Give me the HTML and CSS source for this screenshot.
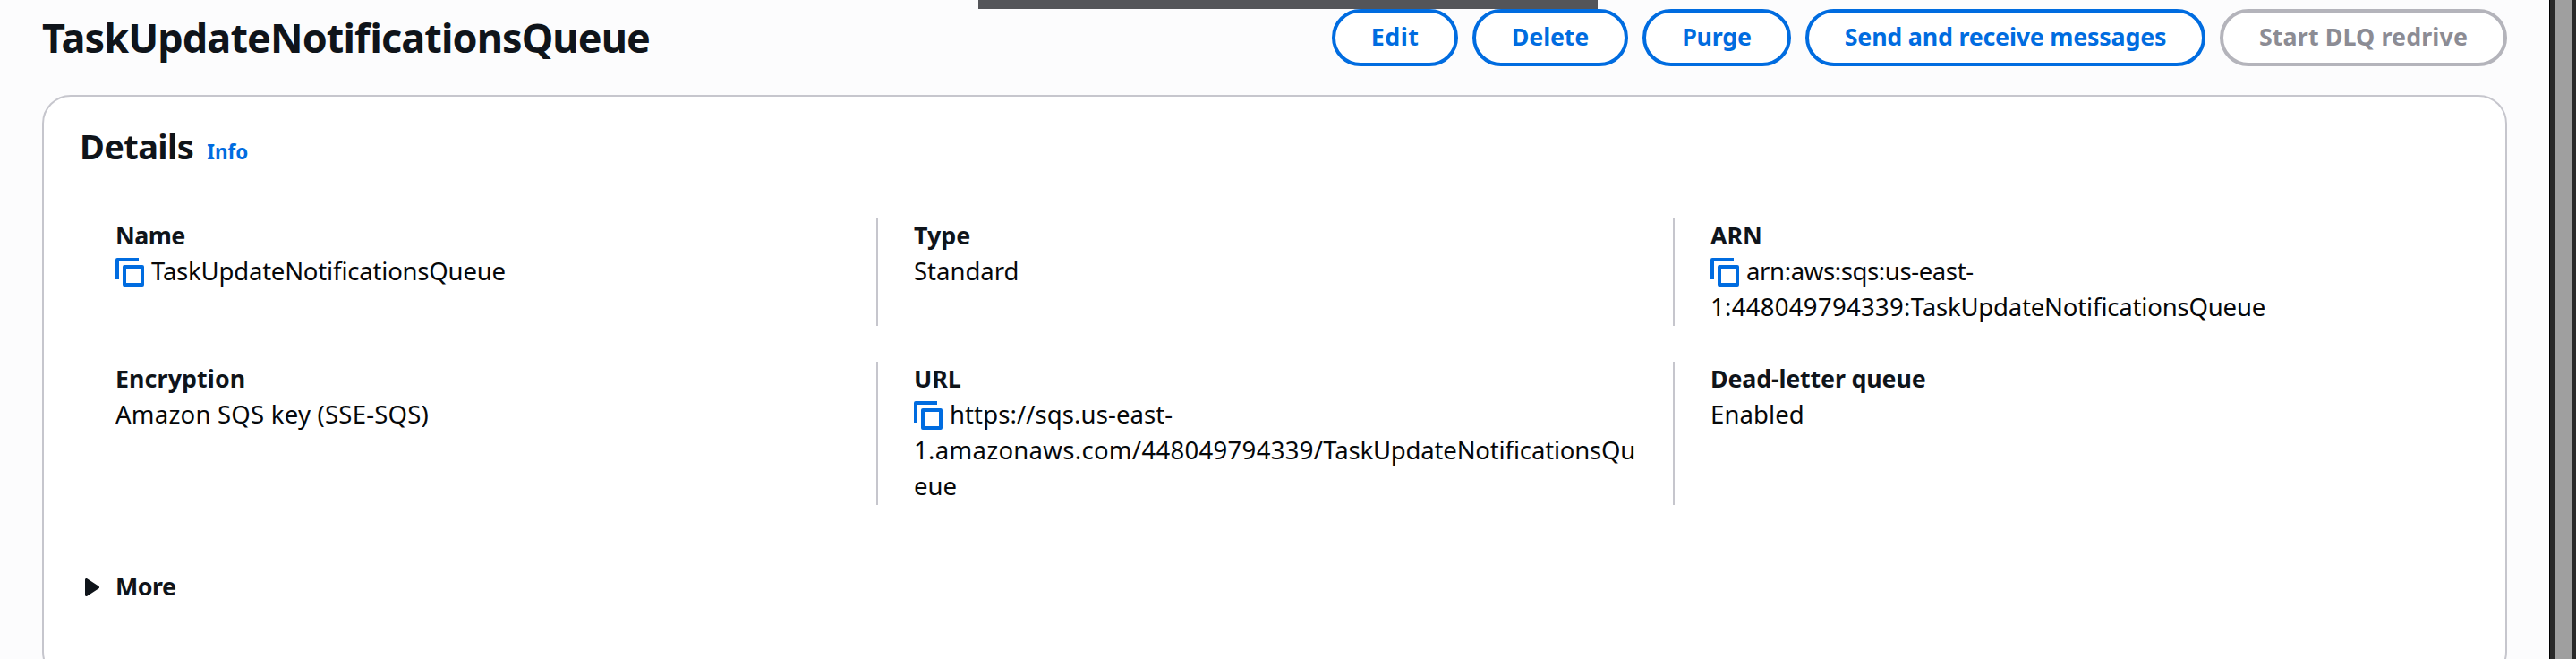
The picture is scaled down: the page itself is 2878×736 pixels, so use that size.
FILE: index.html
```html
<!DOCTYPE html>
<html lang="en">
<head>
<meta charset="utf-8">
<title>TaskUpdateNotificationsQueue</title>
<link rel="stylesheet" href="styles.css">
</head>
<body>
<svg class="defs" width="0" height="0" aria-hidden="true">
  <symbol id="copy" viewBox="0 0 32 32">
    <path d="M2 24V2H26" fill="none" stroke="currentColor" stroke-width="4" stroke-linejoin="round"/>
    <rect x="10" y="10" width="20" height="20" fill="none" stroke="currentColor" stroke-width="4" stroke-linejoin="round"/>
  </symbol>
</svg>
<div class="window">
  <div class="flash"></div>
  <main class="page">
    <header class="header">
      <h1 class="title">TaskUpdateNotificationsQueue</h1>
      <div class="actions">
        <button class="btn btn-edit">Edit</button>
        <button class="btn btn-delete">Delete</button>
        <button class="btn btn-purge">Purge</button>
        <button class="btn btn-send">Send and receive messages</button>
        <button class="btn btn-redrive" disabled>Start DLQ redrive</button>
      </div>
    </header>
    <section class="card">
      <div class="card-head">
        <h2 class="card-title">Details</h2>
        <a class="info">Info</a>
      </div>
      <div class="grid">
        <div class="cell"><div class="field">
          <div class="label l-name">Name</div>
          <div class="line"><svg class="icon"><use href="#copy"/></svg><span class="v-name">TaskUpdateNotificationsQueue</span></div>
        </div></div>
        <div class="cell"><div class="field">
          <div class="label">Type</div>
          <div class="line"><span>Standard</span></div>
        </div></div>
        <div class="cell"><div class="field">
          <div class="label">ARN</div>
          <div class="line"><svg class="icon"><use href="#copy"/></svg><span class="v-arn">arn:aws:sqs:us-east-</span></div>
          <div class="line"><span><span class="v-id">1:448049794339:</span><span class="v-queue">TaskUpdateNotificationsQueue</span></span></div>
        </div></div>
        <div class="cell"><div class="field">
          <div class="label l-enc">Encryption</div>
          <div class="line"><span class="v-enc">Amazon SQS key (SSE-SQS)</span></div>
        </div></div>
        <div class="cell"><div class="field">
          <div class="label">URL</div>
          <div class="line"><svg class="icon"><use href="#copy"/></svg><span class="v-url">https://sqs.us-east-</span></div>
          <div class="line"><span><span class="v-id">1.amazonaws.com/448049794339/</span><span class="v-queue">TaskUpdateNotificationsQu</span></span></div>
          <div class="line"><span>eue</span></div>
        </div></div>
        <div class="cell"><div class="field">
          <div class="label l-dlq">Dead-letter queue</div>
          <div class="line"><span class="v-dlq">Enabled</span></div>
        </div></div>
      </div>
      <div class="more">
        <svg class="caret" viewBox="0 0 16 20"><path d="M1.5 1.5V18.5L14.5 10Z" fill="currentColor" stroke="currentColor" stroke-width="3" stroke-linejoin="round"/></svg>
        <span>More</span>
      </div>
    </section>
  </main>
  <div class="scrollbar"></div>
</div>
</body>
</html>
```
FILE: styles.css
```css
* { box-sizing: border-box; }

body {
  margin: 0;
  background: #fcfcfd;
  color: #0f141a;
  font-family: "Noto Sans", "Open Sans", sans-serif;
  font-size: 27.5px;
  line-height: 40px;
  font-feature-settings: "liga" 1;
  overflow: hidden;
}

.defs { position: absolute; }

.window {
  position: relative;
  display: flex;
  height: 736px;
  overflow: hidden;
}

.flash {
  position: absolute;
  left: 1093px;
  top: 0;
  width: 692px;
  height: 10px;
  background: #545559;
}

.page {
  flex: 1;
  padding: 10px 48px 0 47px;
}

.header {
  display: flex;
  justify-content: space-between;
  height: 96px;
}

.title {
  margin: 2px 0 0;
  font-size: 45px;
  line-height: 60px;
  font-weight: 700;
  letter-spacing: -0.91px;
}

.actions { display: flex; gap: 16px; }

.btn {
  height: 64px;
  padding: 0 0 3px;
  border: 4px solid #006ce0;
  border-radius: 40px;
  background: #fff;
  color: #006ce0;
  font: 700 26.8px/40px "Noto Sans", sans-serif;
  white-space: nowrap;
}
.btn-edit { width: 141px; letter-spacing: 0.5px; }
.btn-delete { width: 174px; letter-spacing: -0.15px; }
.btn-purge { width: 166px; letter-spacing: -0.2px; }
.btn-send { width: 447px; letter-spacing: -0.2px; }
.btn-redrive {
  width: 321px;
  letter-spacing: 0.13px;
  border-color: #b4b4bb;
  color: #8c8c94;
}

.card {
  height: 654px;
  padding: 30px 40px 0;
  border: 2px solid #c6c6cd;
  border-radius: 32px;
  background: #fff;
}

.card-head {
  display: flex;
  align-items: baseline;
  gap: 15px;
  height: 106px;
}
.card-title {
  margin: 0;
  font-size: 38px;
  line-height: 50px;
  font-weight: 700;
  letter-spacing: -0.6px;
}
.info {
  color: #006ce0;
  font-size: 22.4px;
  font-weight: 700;
}

.grid {
  display: grid;
  grid-template-columns: repeat(3, 890px);
  grid-template-rows: 120px 160px;
  row-gap: 40px;
}
.cell {
  padding-left: 40px;
  border-left: 2px solid #c6c6cd;
}
.cell:nth-child(3n + 1) { border-left: 0; }
.field { margin-top: -1px; }

.label { font-weight: 700; font-size: 26.8px; }
.line {
  display: flex;
  gap: 8px;
  height: 40px;
  white-space: nowrap;
  color: #06080a;
}
.icon {
  width: 32px;
  height: 32px;
  margin-top: 5px;
  color: #006ce0;
}

.l-name { letter-spacing: -0.6px; }
.l-enc { letter-spacing: 0.1px; }
.l-dlq { letter-spacing: -0.15px; }
.v-name { letter-spacing: -0.2px; }
.v-url { letter-spacing: 0.1px; }
.v-arn { letter-spacing: -0.38px; }
.v-id { letter-spacing: 0.3px; }
.v-queue { letter-spacing: -0.18px; }
.v-enc { letter-spacing: 0.23px; }
.v-dlq { letter-spacing: 0.1px; }

.more {
  display: flex;
  gap: 18px;
  margin-top: 71px;
  padding-left: 6px;
  font-weight: 700;
  font-size: 26.8px;
  letter-spacing: -0.45px;
}
.caret { width: 16px; height: 20px; margin-top: 11px; }

.scrollbar {
  width: 29px;
  border: solid #292929;
  border-width: 0 4px 0 5px;
  background: #9f9f9f;
  box-shadow: -1px 0 #000, inset 1px 0 #000, inset -1px 0 #000;
}
```
